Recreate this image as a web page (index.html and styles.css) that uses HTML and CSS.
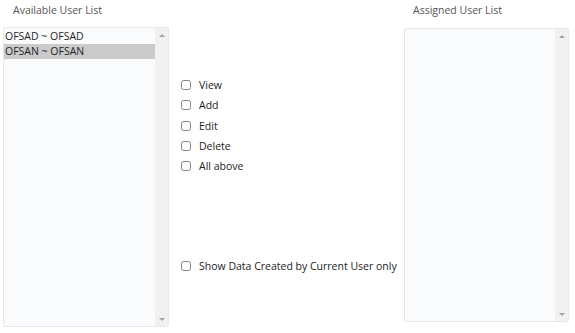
FILE: index.html
```html
<!DOCTYPE html>
<html>
<head>
<meta charset="utf-8">
<link rel="stylesheet" href="styles.css">
</head>
<body>
<div class="page">
  <div class="col col-left">
    <div class="col-title">Available User List</div>
    <div class="listbox listbox-left">
      <div class="list-items">
        <div class="item">OFSAD ~ OFSAD</div>
        <div class="item selected">OFSAN ~ OFSAN</div>
      </div>
      <div class="scrollbar">
        <span class="arrow up"></span>
        <span class="arrow down"></span>
      </div>
    </div>
  </div>
  <div class="col col-mid">
    <div class="checks">
      <label class="check"><span class="box"></span>View</label>
      <label class="check"><span class="box"></span>Add</label>
      <label class="check"><span class="box"></span>Edit</label>
      <label class="check"><span class="box"></span>Delete</label>
      <label class="check"><span class="box"></span>All above</label>
    </div>
    <label class="check check-own"><span class="box"></span>Show Data Created by Current User only</label>
  </div>
  <div class="col col-right">
    <div class="col-title">Assigned User List</div>
    <div class="listbox listbox-right">
      <div class="list-items"></div>
      <div class="scrollbar">
        <span class="arrow up"></span>
        <span class="arrow down"></span>
      </div>
    </div>
  </div>
</div>
</body>
</html>
```

FILE: styles.css
```css
html, body {
  margin: 0;
  padding: 0;
  background: #ffffff;
}
body {
  font-family: "Open Sans", "Noto Sans", sans-serif;
  font-size: 10.5px;
  color: #222;
}
.page {
  display: flex;
  padding: 0 0 0 3px;
}
.col-left {
  width: 166px;
}
.col-mid {
  width: 223px;
  padding: 75px 0 0 12px;
  box-sizing: border-box;
}
.col-right {
  width: 165px;
  margin-left: 12px;
}
.col-title {
  height: 20px;
  line-height: 20px;
  color: #555;
  padding-left: 10px;
  margin-bottom: 7px;
}
.col-right .col-title {
  padding-left: 9px;
  margin-bottom: 8px;
}
.listbox {
  display: flex;
  border: 1px solid #e6e8eb;
  border-radius: 2px;
  background: #fafbfd;
  box-sizing: border-box;
}
.listbox-left {
  height: 300px;
}
.listbox-right {
  height: 294px;
}
.list-items {
  flex: 1;
  padding-top: 1px;
}
.item {
  height: 15px;
  line-height: 15px;
  padding-left: 1px;
  color: #1f1f1f;
  white-space: nowrap;
}
.item.selected {
  background: #cbcbcb;
}
.scrollbar {
  width: 13px;
  background: #f1f1f1;
  display: flex;
  flex-direction: column;
  justify-content: space-between;
  align-items: center;
  padding: 6px 0 5px;
}
.arrow {
  width: 0;
  height: 0;
  border-left: 3px solid transparent;
  border-right: 3px solid transparent;
}
.arrow.up {
  border-bottom: 3px solid #a3a3a3;
}
.arrow.down {
  border-top: 3px solid #a3a3a3;
}
.checks {
  display: flex;
  flex-direction: column;
}
.check {
  display: flex;
  align-items: center;
  height: 20.25px;
  color: #222;
  white-space: nowrap;
}
.box {
  width: 8px;
  height: 8px;
  border: 1px solid #858585;
  border-radius: 2.5px;
  background: #fff;
  margin-right: 8px;
  flex: none;
}
.check-own {
  margin-top: 80px;
}
```
